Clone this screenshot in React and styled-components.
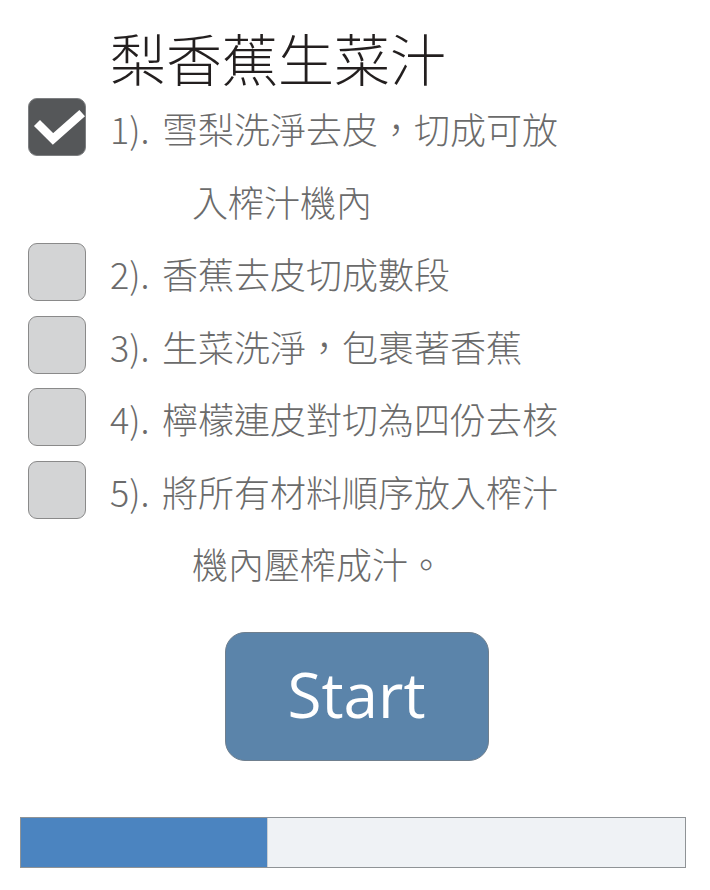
import React from 'react';
import { useState } from 'react';
import styled, { createGlobalStyle } from 'styled-components';

const GlobalStyle = createGlobalStyle`
  body {
    margin: 0;
    background: #ffffff;
    font-family: "Noto Sans CJK TC", "Noto Sans", sans-serif;
  }
`;

const Page = styled.div`
  width: 710px;
  height: 890px;
  display: flex;
  flex-direction: column;
`;

const Title = styled.h1`
  margin: 21px 0 0 110px;
  font-size: 56px;
  line-height: 72px;
  font-weight: 300;
  color: #231f1f;
`;

const List = styled.div`
  display: flex;
  flex-direction: column;
  padding-left: 28px;
`;

const Row = styled.div`
  display: flex;
  align-items: flex-start;
  gap: 24px;
`;

const Box = styled.div`
  flex: none;
  width: 58px;
  height: 58px;
  margin-top: 5px;
  box-sizing: border-box;
  border-radius: 9px;
  border: 1px solid ${(p) => (p.checked ? '#7d7f81' : '#8a8a8a')};
  background: ${(p) => (p.checked ? '#555759' : '#d3d4d5')};
  cursor: pointer;
`;

const Text = styled.div`
  margin-top: -1px;
  margin-bottom: 1px;
  font-size: 36px;
  line-height: 72.5px;
  font-weight: 300;
  color: #6b6b6b;
  white-space: nowrap;
`;

const Num = styled.span`
  display: inline-block;
  width: 52px;
`;

const Line = styled.div`
  padding-left: ${(p) => (p.indent ? '82px' : '0')};
`;

const ButtonRow = styled.div`
  display: flex;
  justify-content: center;
  margin-top: 31px;
  padding-left: 3px;
`;

const StartButton = styled.button`
  width: 264px;
  height: 129px;
  border-radius: 20px;
  border: 1px solid #6f7f8e;
  background: #5b84aa;
  color: #ffffff;
  font-family: "Open Sans", "Liberation Sans", sans-serif;
  font-size: 62px;
  font-weight: 400;
  padding: 0 0 4px;
  cursor: pointer;
`;

const Progress = styled.div`
  margin: 56px 0 0 20px;
  width: 666px;
  height: 51px;
  box-sizing: border-box;
  border: 1px solid #8f9396;
  background: #eff2f5;
  display: flex;
`;

const Fill = styled.div`
  height: 100%;
  background: #4b84c0;
  border-right: 1px solid #c9ced3;
`;

const Check = () => (
  <svg width="56" height="56" viewBox="0 0 56 56">
    <polyline
      points="11,27 24,40 50,17"
      fill="none"
      stroke="#ffffff"
      strokeWidth="8.5"
      strokeLinecap="square"
      strokeLinejoin="miter"
    />
  </svg>
);

const steps = [
  ['雪梨洗淨去皮，切成可放', '入榨汁機內'],
  ['香蕉去皮切成數段'],
  ['生菜洗淨，包裹著香蕉'],
  ['檸檬連皮對切為四份去核'],
  ['將所有材料順序放入榨汁', '機內壓榨成汁。'],
];

const App = () => {
  const [done, setDone] = useState([true, false, false, false, false]);
  const toggle = (i) => setDone(done.map((d, j) => (j === i ? !d : d)));
  const progress = 37;

  return (
    <Page>
      <GlobalStyle />
      <Title>梨香蕉生菜汁</Title>
      <List>
        {steps.map((lines, i) => (
          <Row key={i}>
            <Box checked={done[i]} onClick={() => toggle(i)}>
              {done[i] && <Check />}
            </Box>
            <Text>
              {lines.map((l, k) => (
                <Line key={k} indent={k > 0}>
                  {k === 0 && <Num>{i + 1}).</Num>}
                  {l}
                </Line>
              ))}
            </Text>
          </Row>
        ))}
      </List>
      <ButtonRow>
        <StartButton>Start</StartButton>
      </ButtonRow>
      <Progress>
        <Fill style={{ width: `${progress}%` }} />
      </Progress>
    </Page>
  );
};

export default App;
